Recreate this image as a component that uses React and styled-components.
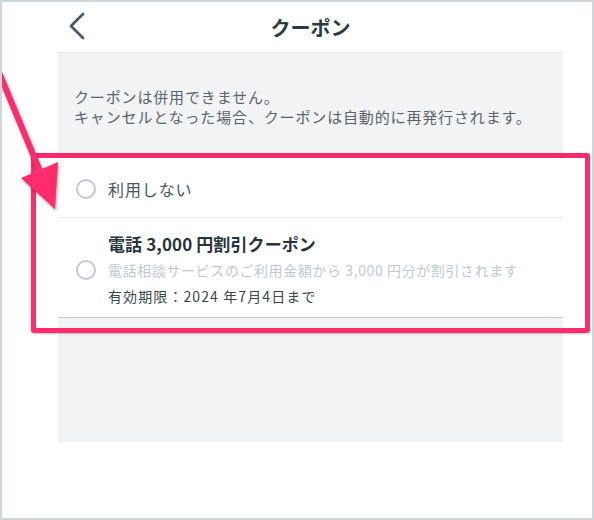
import React from 'react'
import styled, { createGlobalStyle } from 'styled-components'

const GlobalStyle = createGlobalStyle`
  html, body {
    margin: 0;
    padding: 0;
    background: #fff;
  }
  body {
    font-family: "Noto Sans CJK JP", "Noto Sans", sans-serif;
  }
`

const Frame = styled.div`
  position: relative;
  box-sizing: border-box;
  width: 594px;
  height: 520px;
  border: 2px solid #d0d5d8;
  background: #fff;
  overflow: hidden;
`

const Screen = styled.div`
  display: flex;
  flex-direction: column;
  width: 505px;
  margin-left: 56px;
`

const Header = styled.header`
  position: relative;
  display: flex;
  align-items: center;
  justify-content: center;
  height: 50px;
  border-bottom: 1px solid #e4e7e9;
`

const BackButton = styled.button`
  position: absolute;
  left: 9px;
  top: 10px;
  display: flex;
  padding: 0;
  border: 0;
  background: none;
`

const Title = styled.h1`
  margin: 0;
  font-size: 20px;
  font-weight: 700;
  color: #2c3b43;
  letter-spacing: 0;
`

const Panel = styled.div`
  display: flex;
  flex-direction: column;
  background: #f2f3f4;
  height: 389px;
`

const Notice = styled.p`
  margin: 0;
  padding: 34px 16px 28px;
  font-size: 15px;
  line-height: 20px;
  letter-spacing: 0.85px;
  color: #58636a;
`

const List = styled.ul`
  margin: 0;
  padding: 0;
  list-style: none;
  background: #fff;
  border-bottom: 1px solid #c9ced1;
`

const Row = styled.li`
  box-sizing: border-box;
  display: flex;
  align-items: center;
  gap: 12px;
  padding: ${p => (p.$tall ? '13px 18px 9px' : '6px 18px 0')};
  height: ${p => (p.$tall ? '100px' : '62px')};
  & + & {
    border-top: 1px solid #e8eaeb;
  }
`

const Radio = styled.span`
  box-sizing: border-box;
  flex: none;
  width: 20px;
  height: 20px;
  border-radius: 50%;
  border: 2px solid #c3c9cd;
  background: #fff;
`

const Label = styled.span`
  font-size: 16px;
  line-height: 26px;
  letter-spacing: 0.9px;
  color: #4a555b;
`

const Coupon = styled.div`
  display: flex;
  flex-direction: column;
`

const CouponName = styled.div`
  font-size: 17px;
  font-weight: 700;
  line-height: 26px;
  letter-spacing: 0.1px;
  color: #27343b;
`

const CouponText = styled.div`
  font-size: 14px;
  line-height: 26px;
  letter-spacing: ${p => (p.$muted ? '0.6px' : '1.1px')};
  color: ${p => (p.$muted ? '#c3c8cb' : '#3c474d')};
`

const Highlight = styled.div`
  position: absolute;
  left: 29px;
  top: 151px;
  width: 559px;
  height: 180px;
  box-sizing: border-box;
  border: 5px solid #ff2c6d;
  border-radius: 3px;
  box-shadow: 0 1px 2px rgba(0, 0, 0, 0.25);
  pointer-events: none;
`

const Arrow = styled.svg`
  position: absolute;
  left: 0;
  top: 0;
  filter: drop-shadow(1px 2px 1.5px rgba(0, 0, 0, 0.35));
  pointer-events: none;
`

const Chevron = () => (
  <svg width="20" height="28" viewBox="0 0 20 28">
    <polyline
      points="16,2 4,14 16,26"
      fill="none"
      stroke="#4b5b63"
      strokeWidth="2.8"
      strokeLinecap="round"
      strokeLinejoin="round"
    />
  </svg>
)

export default function App() {
  return (
    <>
      <GlobalStyle />
      <Frame>
        <Screen>
          <Header>
            <BackButton aria-label="戻る">
              <Chevron />
            </BackButton>
            <Title>クーポン</Title>
          </Header>
          <Panel>
            <Notice>
              クーポンは併用できません。
              <br />
              キャンセルとなった場合、クーポンは自動的に再発行されます。
            </Notice>
            <List>
              <Row>
                <Radio />
                <Label>利用しない</Label>
              </Row>
              <Row $tall>
                <Radio />
                <Coupon>
                  <CouponName>電話 3,000 円割引クーポン</CouponName>
                  <CouponText $muted>電話相談サービスのご利用金額から 3,000 円分が割引されます</CouponText>
                  <CouponText>有効期限：2024 年7月4日まで</CouponText>
                </Coupon>
              </Row>
            </List>
          </Panel>
        </Screen>
        <Highlight />
        <Arrow width="70" height="220" viewBox="0 0 70 220">
          <line x1="-4" y1="68" x2="40" y2="174" stroke="#ff2c6d" strokeWidth="6" />
          <polygon points="56,160 19,176 53,207" fill="#ff2c6d" />
        </Arrow>
      </Frame>
    </>
  )
}
